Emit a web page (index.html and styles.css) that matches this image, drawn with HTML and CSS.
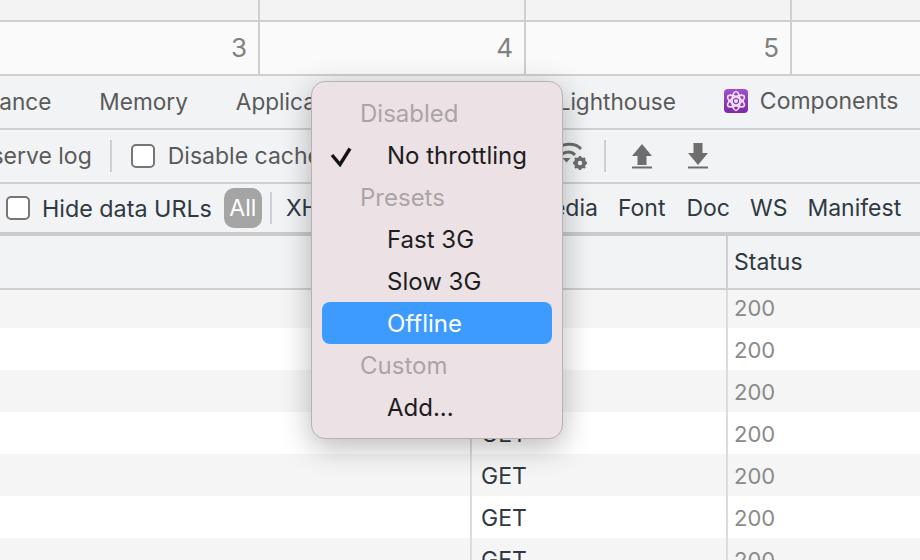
FILE: index.html
```html
<!DOCTYPE html>
<html lang="en">
<head>
<meta charset="utf-8">
<title>DevTools network throttling</title>
<link rel="stylesheet" href="styles.css">
</head>
<body>
<div class="page">
  <div class="overview">
    <div class="ov-row ov-top"><span></span><span></span><span></span><span></span></div>
    <div class="ov-row ov-nums"><span>3</span><span>4</span><span>5</span><span></span></div>
  </div>
  <nav class="bar tabs">
    <span>Performance</span>
    <span>Memory</span>
    <span>Application</span>
    <span class="security">Security</span>
    <span>Lighthouse</span>
    <span class="comp">
      <svg class="atom" width="24" height="24" viewBox="0 0 24 24">
        <defs><linearGradient id="g" x1="0" y1="0" x2="0" y2="1"><stop offset="0" stop-color="#a44fd0"/><stop offset="1" stop-color="#7f28a8"/></linearGradient></defs>
        <rect width="24" height="24" rx="4" fill="url(#g)"/>
        <g fill="none" stroke="#f3e6fa" stroke-width="1.6">
          <ellipse cx="12" cy="12" rx="4" ry="9.500"/>
          <ellipse cx="12" cy="12" rx="4" ry="9.500" transform="rotate(60 12 12)"/>
          <ellipse cx="12" cy="12" rx="4" ry="9.500" transform="rotate(120 12 12)"/>
        </g>
        <circle cx="12" cy="12" r="2" fill="#f3e6fa"/>
      </svg>
      Components
    </span>
  </nav>
  <div class="bar toolbar">
    <span class="preserve">Preserve log</span>
    <i class="sep sep-a"></i>
    <label class="check"><i class="box"></i>Disable cache</label>
    <svg class="wifi" width="34" height="30" viewBox="0 0 34 30">
      <g fill="none" stroke="#6e6e6e" stroke-width="3">
        <path d="M2 9.500C8 2 22 1 28 8"/>
        <path d="M7 15C11 10 18 10 22 14"/>
      </g>
      <path d="M9.500 17h8l-4 4.500z" fill="#6e6e6e"/>
      <circle cx="27" cy="22" r="4.600" fill="none" stroke="#6e6e6e" stroke-width="3"/>
      <path d="M27 15v14M20 22h14M22 17l10 10M32 17L22 27" stroke="#6e6e6e" stroke-width="2.400"/>
      <circle cx="27" cy="22" r="2.200" fill="#f1f3f5"/>
    </svg>
    <i class="sep sep-b"></i>
    <svg class="arrow arrow-up" width="20" height="26" viewBox="0 0 20 26">
      <path d="M10 1l10 12h-5.500v9h-9v-9H0z" fill="#6e6e6e"/><rect y="23.500" width="20" height="2" fill="#6e6e6e"/>
    </svg>
    <svg class="arrow arrow-down" width="20" height="26" viewBox="0 0 20 26">
      <path d="M5.500 0h9v10H20L10 22 0 10h5.500z" fill="#6e6e6e"/><rect y="23.500" width="20" height="2" fill="#6e6e6e"/>
    </svg>
  </div>
  <div class="bar filters">
    <label class="check hide"><i class="box"></i>Hide data URLs</label>
    <span class="pill">All</span>
    <i class="sep sep-c"></i>
    <span>XHR</span>
    <span>JS</span>
    <span>CSS</span>
    <span>Img</span>
    <span class="media">Media</span>
    <span>Font</span>
    <span class="doc">Doc</span>
    <span>WS</span>
    <span>Manifest</span>
  </div>
  <div class="grid">
    <div class="row head"><span></span><span></span><span>Status</span></div>
    <div class="row odd first"><span></span><span>GET</span><span class="st">200</span></div>
    <div class="row"><span></span><span>GET</span><span class="st">200</span></div>
    <div class="row odd"><span></span><span>GET</span><span class="st">200</span></div>
    <div class="row"><span></span><span>GET</span><span class="st">200</span></div>
    <div class="row odd"><span></span><span>GET</span><span class="st">200</span></div>
    <div class="row"><span></span><span>GET</span><span class="st">200</span></div>
    <div class="row odd"><span></span><span>GET</span><span class="st">200</span></div>
  </div>
  <div class="menu">
    <div class="mi label">Disabled</div>
    <div class="mi item"><svg class="tick" width="22" height="20" viewBox="0 0 22 20"><path d="M2 8l8 9.500L20 1.500" fill="none" stroke="#141414" stroke-width="3.400"/></svg>No throttling</div>
    <div class="mi label">Presets</div>
    <div class="mi item">Fast 3G</div>
    <div class="mi item">Slow 3G</div>
    <div class="mi item active">Offline</div>
    <div class="mi label">Custom</div>
    <div class="mi item">Add...</div>
  </div>
</div>
</body>
</html>
```
FILE: styles.css
```css
html, body { margin: 0; padding: 0; }
body { width: 920px; height: 560px; overflow: hidden; background: #fff; }
.page {
  position: relative;
  width: 920px;
  height: 560px;
  overflow: hidden;
  font-family: Inter, "Liberation Sans", sans-serif;
  font-size: 23px;
  color: #303942;
}
.overview { background: #fafafa; }
.ov-row { display: grid; grid-template-columns: 260px 266px 266px 1fr; }
.ov-row span { border-right: 2px solid #cfcfcf; box-sizing: border-box; }
.ov-row span:last-child { border-right: 0; }
.ov-top { height: 20px; background: #f3f3f3; }
.ov-nums {
  height: 52px;
  border-top: 2px solid #cfcfcf;
  color: #808080;
  font-size: 26px;
  line-height: 52px;
  text-align: right;
}
.ov-nums span { padding-right: 11px; }
.bar {
  display: flex;
  align-items: center;
  background: #f1f3f5;
  box-sizing: border-box;
  white-space: nowrap;
}
.tabs {
  height: 56px;
  gap: 48px;
  margin-left: -87px;
  margin-right: -40px;
  padding-bottom: 2px;
  color: #5a5a5a;
  font-size: 22.600px;
  border-top: 2px solid #cdcfd2;
  border-bottom: 2px solid #cdcfd2;
}
.comp { display: flex; align-items: center; gap: 12px; font-size: 23px; }
.security { width: 106px; }
.toolbar {
  height: 54px;
  color: #5a5a5a;
  margin-left: -45px;
  border-bottom: 2px solid #cdcfd2;
}
.sep { display: block; width: 2px; background: #cdcfd2; flex: none; }
.sep-a { height: 32px; margin: 0 19px 0 18px; }
.check { display: flex; align-items: center; gap: 13px; }
.box {
  display: block;
  width: 24px;
  height: 24px;
  box-sizing: border-box;
  background: #fff;
  border: 2px solid #767676;
  border-radius: 5px;
}
.wifi { margin-left: 232px; flex: none; }
.sep-b { height: 32px; margin: 0 26px 0 17px; }
.arrow { flex: none; }
.arrow-down { margin-left: 36px; }
.filters {
  height: 52px;
  padding-left: 6px;
  gap: 20px;
  border-bottom: 4px solid #cbcbcb;
}
.hide { margin-right: -8px; font-size: 23.300px; gap: 12px; }
.pill {
  background: #a5a5a5;
  color: #fff;
  width: 38px;
  height: 40px;
  line-height: 40px;
  text-align: center;
  border-radius: 10px;
}
.sep-c { height: 32px; margin: 0 -6px 0 -12px; }
.media { margin-left: 3px; }
.doc { margin-left: 1px; }
.grid { background: #fff; }
.row {
  display: grid;
  grid-template-columns: 472px 256px 1fr;
  height: 42px;
  line-height: 44px;
  box-sizing: border-box;
}
.row span { border-right: 2px solid #dcdcdc; padding-left: 9px; }
.row span:first-child { padding: 0; }
.row span:last-child { border-right: 0; padding-left: 6px; }
.odd { background: #f5f5f5; }
.first { height: 38px; line-height: 36px; }
.head {
  height: 54px;
  line-height: 52px;
  background: #f1f3f5;
  border-bottom: 2px solid #cdcfd2;
}
.head span { border-right-color: #cdcfd2; }
.st { color: #8a8a8a; font-size: 22px; }
.menu {
  position: absolute;
  left: 311px;
  top: 81px;
  width: 252px;
  box-sizing: border-box;
  padding: 10px 10px;
  background: #ece1e4;
  border: 1px solid #b9b1b4;
  border-radius: 14px;
  box-shadow: 0 8px 30px rgba(0, 0, 0, .28);
  font-size: 24px;
}
.mi {
  position: relative;
  height: 42px;
  line-height: 43px;
  border-radius: 8px;
  color: #1d1d1f;
  padding-left: 65px;
}
.mi.label { padding-left: 38px; color: #aba5a8; }
.mi.active { background: #3d9bff; color: #fff; }
.tick { position: absolute; left: 8px; top: 13px; }
```
